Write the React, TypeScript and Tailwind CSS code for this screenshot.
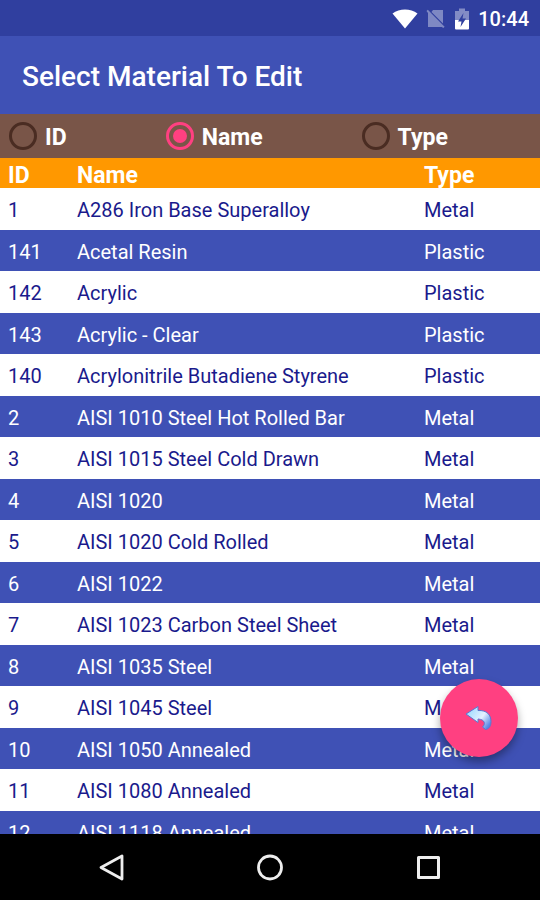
import { useState } from 'react';

interface Material {
  id: number;
  name: string;
  type: string;
}

const materials: Material[] = [
  { id: 1, name: 'A286 Iron Base Superalloy', type: 'Metal' },
  { id: 141, name: 'Acetal Resin', type: 'Plastic' },
  { id: 142, name: 'Acrylic', type: 'Plastic' },
  { id: 143, name: 'Acrylic - Clear', type: 'Plastic' },
  { id: 140, name: 'Acrylonitrile Butadiene Styrene', type: 'Plastic' },
  { id: 2, name: 'AISI 1010 Steel Hot Rolled Bar', type: 'Metal' },
  { id: 3, name: 'AISI 1015 Steel Cold Drawn', type: 'Metal' },
  { id: 4, name: 'AISI 1020', type: 'Metal' },
  { id: 5, name: 'AISI 1020 Cold Rolled', type: 'Metal' },
  { id: 6, name: 'AISI 1022', type: 'Metal' },
  { id: 7, name: 'AISI 1023 Carbon Steel Sheet', type: 'Metal' },
  { id: 8, name: 'AISI 1035 Steel', type: 'Metal' },
  { id: 9, name: 'AISI 1045 Steel', type: 'Metal' },
  { id: 10, name: 'AISI 1050 Annealed', type: 'Metal' },
  { id: 11, name: 'AISI 1080 Annealed', type: 'Metal' },
  { id: 12, name: 'AISI 1118 Annealed', type: 'Metal' },
];

const sortKeys = ['ID', 'Name', 'Type'];

function StatusBar() {
  return (
    <div className="flex h-9 shrink-0 items-center justify-end bg-[#303f9f] pt-px pr-[11px] text-white">
      <svg width="26" height="20" viewBox="0 0 26 20" fill="currentColor">
        <path d="M0.5 4.5C7.5 -1 18.5 -1 25.5 4.5L13 19.5Z" />
      </svg>
      <svg className="ml-2" width="20" height="20" viewBox="0 0 20 20" fill="#fff" fillOpacity="0.38">
        <path d="M7 1H17V14.5L5.500 3Z" />
        <path d="M0.5 2L1.8 0.8L18.6 17.800L17.300 19L15.800 18H2V4Z" />
      </svg>
      <svg className="ml-2" width="16" height="22" viewBox="0 0 16 22">
        <path d="M5 0.5H11V3H15V12H1V3H5Z" fill="#fff" fillOpacity="0.4" />
        <path d="M1 12H15V20.5Q15 21.5 14 21.5H2Q1 21.5 1 20.5Z" fill="#fff" />
        <path d="M9.5 5L4 13.5H7.5L6.5 19L12 10.5H8.5Z" fill="#303f9f" />
      </svg>
      <span className="ml-2 text-xl font-medium">10:44</span>
    </div>
  );
}

function SortBar({ value, onChange }: { value: string; onChange: (key: string) => void }) {
  return (
    <div className="flex h-11 shrink-0 items-center gap-[99px] bg-[#795548] px-[9px]">
      {sortKeys.map((key) => (
        <label key={key} className="flex items-center gap-2 text-[23px] font-bold text-white">
          <input
            type="radio"
            name="sort"
            checked={value === key}
            onChange={() => onChange(key)}
            className="grid size-7 appearance-none place-content-center rounded-full border-[3px] border-[#4a2c22] before:size-[14px] before:rounded-full checked:border-[#ff4081] checked:before:bg-[#ff4081]"
          />
          <span className="pt-1">{key}</span>
        </label>
      ))}
    </div>
  );
}

function MaterialTable() {
  return (
    <table className="w-full table-fixed text-left text-xl text-[#1a1a8c]">
      <thead>
        <tr className="h-[30px] bg-[#ff9800] text-[23px] leading-[24px] text-white">
          <th className="w-[69px] px-2 pt-1.5 pb-0 font-bold">ID</th>
          <th className="px-2 pt-1.5 pb-0 font-bold">Name</th>
          <th className="w-[124px] px-2 pt-1.5 pb-0 font-bold">Type</th>
        </tr>
      </thead>
      <tbody>
        {materials.map((m) => (
          <tr key={m.id} className="h-[42px] bg-white even:h-[41px] even:bg-[#3f51b5] even:text-white">
            <td className="px-2 pt-0.5 pb-0">{m.id}</td>
            <td className="truncate px-2 pt-0.5 pb-0">{m.name}</td>
            <td className="px-2 pt-0.5 pb-0">{m.type}</td>
          </tr>
        ))}
      </tbody>
    </table>
  );
}

function UndoIcon() {
  return (
    <svg width="28" height="26" viewBox="0 0 28 26">
      <defs>
        <linearGradient id="undo" x1="0" y1="0" x2="1" y2="0.7">
          <stop offset="0" stopColor="#8fd0ff" />
          <stop offset="0.3" stopColor="#b5e2ff" />
          <stop offset="0.65" stopColor="#e4f1ff" />
          <stop offset="1" stopColor="#5a8ae6" />
        </linearGradient>
      </defs>
      <path
        d="M1 9L13 1.500V5.500C22 5 26 10 26 16.500C26 21 24 24 20.500 24.500L17.500 22C20.500 19.500 20.500 14.500 13 14V17.500Z"
        fill="url(#undo)"
        stroke="#5b78d0"
        strokeWidth="1"
        strokeLinejoin="round"
      />
    </svg>
  );
}

function NavBar() {
  return (
    <nav className="flex h-[66px] shrink-0 items-center justify-center gap-[130px] bg-black pt-px text-[#eee]">
      <button aria-label="Back">
        <svg width="28" height="28" viewBox="0 0 28 28" fill="none" stroke="currentColor" strokeWidth="2.8" strokeLinejoin="round">
          <path d="M3 13.500L24 2V25Z" />
        </svg>
      </button>
      <button aria-label="Home">
        <svg width="28" height="28" viewBox="0 0 28 28" fill="none" stroke="currentColor" strokeWidth="2.8">
          <circle cx="14" cy="13.5" r="11.5" />
        </svg>
      </button>
      <button aria-label="Recent apps">
        <svg width="28" height="28" viewBox="0 0 28 28" fill="none" stroke="currentColor" strokeWidth="3" strokeLinejoin="round">
          <rect x="4.5" y="3.5" width="20" height="20" />
        </svg>
      </button>
    </nav>
  );
}

export default function App() {
  const [sortBy, setSortBy] = useState('Name');

  return (
    <div className="flex h-screen flex-col bg-white font-[Roboto,sans-serif]">
      <StatusBar />
      <header className="flex h-[78px] shrink-0 items-center bg-[#3f51b5] px-[22px] pt-1">
        <h1 className="text-[28px] font-medium text-white">Select Material To Edit</h1>
      </header>
      <SortBar value={sortBy} onChange={setSortBy} />
      <main className="relative min-h-0 flex-1 overflow-hidden">
        <MaterialTable />
        <button
          aria-label="Go back"
          className="absolute right-[22px] bottom-[77px] flex size-[78px] items-center justify-center rounded-full bg-[#ff4081] shadow-[0_5px_8px_rgba(0,0,0,0.35)]"
        >
          <UndoIcon />
        </button>
      </main>
      <NavBar />
    </div>
  );
}
